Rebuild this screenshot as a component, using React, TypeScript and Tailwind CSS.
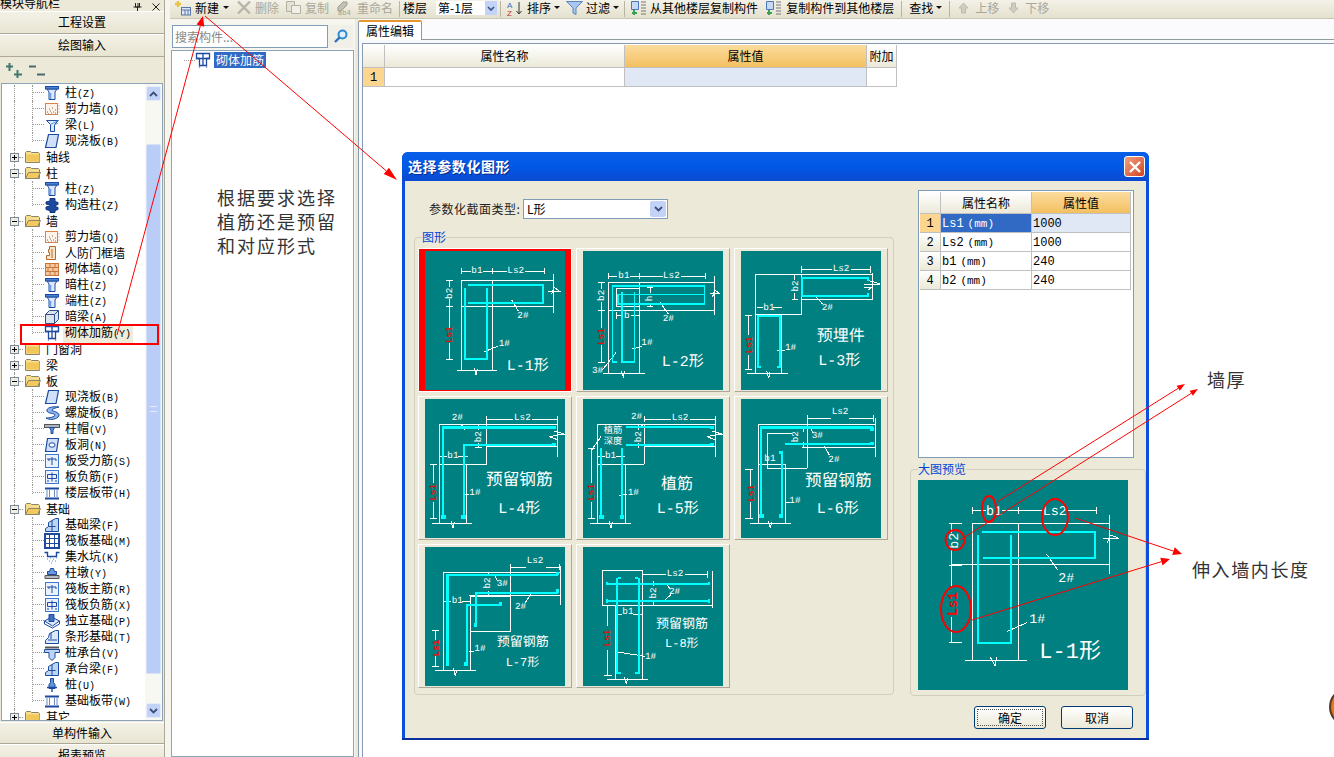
import type { ReactNode } from "react";

const BLUE = "#1b4aa0";

// tree icons, 16x16
const icons: Record<string, ReactNode> = {
  column: (
    <>
      <path d="M3 4h10l-2 3v7.5H5V7z" fill="#dce9fb" stroke={BLUE} />
      <rect x="1.5" y="1.5" width="13" height="2.5" fill="#4a84d8" stroke={BLUE} />
      <path d="M6.5 8v6" stroke="#6fa0e4" strokeWidth="1.5" />
    </>
  ),
  shear: (
    <>
      <rect x="1.5" y="2.5" width="12" height="11" fill="#fdf3e8" stroke="#d9834a" />
      <path d="M3 11h1M6 10h1M9 11h1M5 8h1M8 7h1M11 9h1M11 12h1M7 12h1M4 13h1" stroke="#777" />
      <path d="M14.5 5h1M14.5 8h1M14.5 11h1" stroke="#d9834a" />
    </>
  ),
  beam: (
    <>
      <path d="M2.5 3.5h12l-4 4v7h-4v-7z" fill="#dbe8fa" stroke={BLUE} />
      <path d="M6.5 7.5l8-4M10 8l4-2" stroke="#5a9bd8" />
    </>
  ),
  slab: <path d="M4.5 1.5h10l-2.5 13H1.5z" fill="#cfe0f8" stroke={BLUE} strokeWidth="1.2" />,
  construct: (
    <path d="M6 1.5h5v3l3 1v2l-3 1v1l3 1v2l-3 1v2H6v-2l-4-1V10l4-1V8L2 7V5l4-1z" fill={BLUE} stroke="#10357c" />
  ),
  frame: (
    <path d="M5.5 1.5h6v13H2.5v-4h3v-3h-1v-3h1zM8 4v9" fill="#f7e3c6" stroke="#b06a30" />
  ),
  brick: (
    <>
      <rect x="1.5" y="2.5" width="13" height="12" fill="#f5c79c" stroke="#c9743a" />
      <path d="M1.5 6.5h13M1.5 10.5h13M6 2.5v4M11 2.5v4M4 6.5v4M9 6.5v4M6 10.5v4M11 10.5v4" stroke="#c9743a" />
    </>
  ),
  darkbeam: (
    <>
      <path d="M1.5 5.5l4-4h9v9l-4 4h-9z" fill="#dbe3ee" stroke="#2d4f8a" />
      <path d="M1.5 5.5h9v9M10.5 5.5l4-4" stroke="#2d4f8a" fill="none" />
    </>
  ),
  rebar: (
    <>
      <path d="M1.5 1.5h13v5h-3v7h-7v-7h-3z" fill="#fff" stroke={BLUE} strokeWidth="1.3" />
      <path d="M1 6.5h14M8 1.5v12M4.5 14.5v1M11.5 14.5v1" stroke={BLUE} strokeWidth="1.3" />
    </>
  ),
  spiral: (
    <path
      d="M15 2C8 1 2 3 3 6c1 3 8 2 8 4s-6 3-9 3c3 2 9 2 12-1s-1-5-5-6 2-3 6-4z"
      fill="#8fb6ee"
      stroke={BLUE}
    />
  ),
  cap: (
    <>
      <rect x="0.5" y="3.5" width="15" height="3" fill="#aab4bf" stroke="#555" />
      <path d="M5.5 6.5h5l-1.5 3v3h-2v-3z" fill="#5f93dc" stroke={BLUE} />
    </>
  ),
  hole: (
    <>
      <path d="M3.5 1.5h11l-2 13H1.5z" fill="#cfe0f8" stroke={BLUE} strokeWidth="1.2" />
      <ellipse cx="8" cy="8" rx="3" ry="2.2" fill="#fff" stroke={BLUE} />
    </>
  ),
  slabmain: (
    <>
      <rect x="1.5" y="1.5" width="13" height="13" fill="#eaf1fc" stroke="#3d78d0" />
      <path d="M3 6h9M8 4v8M5 6v2M12 6v2" stroke={BLUE} fill="none" />
    </>
  ),
  slabneg: (
    <>
      <rect x="1.5" y="1.5" width="13" height="13" fill="#eaf1fc" stroke="#3d78d0" />
      <path d="M3.5 5.5h9v4h-9zM8 3.5v9M3 12h2M11 12h2" stroke={BLUE} fill="none" />
    </>
  ),
  band: (
    <>
      <path d="M1 3.5h14M1 13.5h14" stroke={BLUE} strokeWidth="2" />
      <path d="M5.5 5v7M10.5 5v7M3 5v7M13 5v7" stroke="#6d8ec0" />
    </>
  ),
  fbeam: (
    <>
      <path d="M1.5 14.5v-3l3-2v-4l7-4h3v13z" fill="#bcd4f5" stroke={BLUE} />
      <path d="M8 3.5v11M4.5 9.5h7" stroke={BLUE} />
    </>
  ),
  raft: (
    <>
      <rect x="1" y="1" width="14" height="14" fill="#fff" stroke={BLUE} strokeWidth="2" />
      <path d="M5.5 1v14M10.5 1v14M1 5.5h14M1 10.5h14" stroke={BLUE} />
    </>
  ),
  sump: (
    <>
      <path d="M0.5 3.5h3v4h9v-4h3" fill="none" stroke={BLUE} strokeWidth="1.4" />
      <path d="M3 10h1M6 9h1M9 10h1M12 9h1M5 12h1M8 12h1M11 12h1M7 14h1" stroke="#4b8ad8" />
    </>
  ),
  pier: (
    <>
      <path d="M1 10.5h14v3H1z" fill="#b6bcc4" stroke="#555" />
      <path d="M6.5 3.5h3l1 3h2v3h-9v-3h2z" fill="#6d9ade" stroke={BLUE} />
    </>
  ),
  indep: (
    <>
      <path d="M0.5 8l7-4 8 4-7 5z" fill="#dbe8fa" stroke={BLUE} />
      <path d="M0.5 8v3l8 4 7-4V8" fill="none" stroke={BLUE} />
      <path d="M5 1.5h5v7H5z" fill="#3f6fc0" stroke={BLUE} />
    </>
  ),
  strip: (
    <>
      <path d="M1.5 14.5v-3l3-3 1-4 6-3h3v13z" fill="#dbe8fa" stroke={BLUE} />
      <path d="M7 4v6M4 11h9" stroke={BLUE} />
    </>
  ),
  pilecap: (
    <>
      <path d="M0.5 4.5h15v3H11v5l-3 3-3-3v-5H0.5z" fill="#bcd4f5" stroke={BLUE} />
      <path d="M1 2.5h14" stroke="#555" strokeWidth="2" />
    </>
  ),
  pile: (
    <>
      <path d="M6.5 1.5h3v4l1.5 2v4H5v-4l1.5-2z" fill="#5f93dc" stroke={BLUE} />
      <path d="M3 10.5h10M8 11.5v3.5" stroke={BLUE} strokeWidth="1.4" />
    </>
  ),
};

type Row = { folder?: "open" | "closed"; label: string; code?: string; icon?: string; last?: boolean; selected?: boolean };

const rows: Row[] = [
  { label: "柱", code: "(Z)", icon: "column" },
  { label: "剪力墙", code: "(Q)", icon: "shear" },
  { label: "梁", code: "(L)", icon: "beam" },
  { label: "现浇板", code: "(B)", icon: "slab", last: true },
  { folder: "closed", label: "轴线" },
  { folder: "open", label: "柱" },
  { label: "柱", code: "(Z)", icon: "column" },
  { label: "构造柱", code: "(Z)", icon: "construct", last: true },
  { folder: "open", label: "墙" },
  { label: "剪力墙", code: "(Q)", icon: "shear" },
  { label: "人防门框墙", icon: "frame" },
  { label: "砌体墙", code: "(Q)", icon: "brick" },
  { label: "暗柱", code: "(Z)", icon: "column" },
  { label: "端柱", code: "(Z)", icon: "column" },
  { label: "暗梁", code: "(A)", icon: "darkbeam" },
  { label: "砌体加筋", code: "(Y)", icon: "rebar", last: true, selected: true },
  { folder: "closed", label: "门窗洞" },
  { folder: "closed", label: "梁" },
  { folder: "open", label: "板" },
  { label: "现浇板", code: "(B)", icon: "slab" },
  { label: "螺旋板", code: "(B)", icon: "spiral" },
  { label: "柱帽", code: "(V)", icon: "cap" },
  { label: "板洞", code: "(N)", icon: "hole" },
  { label: "板受力筋", code: "(S)", icon: "slabmain" },
  { label: "板负筋", code: "(F)", icon: "slabneg" },
  { label: "楼层板带", code: "(H)", icon: "band", last: true },
  { folder: "open", label: "基础" },
  { label: "基础梁", code: "(F)", icon: "fbeam" },
  { label: "筏板基础", code: "(M)", icon: "raft" },
  { label: "集水坑", code: "(K)", icon: "sump" },
  { label: "柱墩", code: "(Y)", icon: "pier" },
  { label: "筏板主筋", code: "(R)", icon: "slabmain" },
  { label: "筏板负筋", code: "(X)", icon: "slabneg" },
  { label: "独立基础", code: "(P)", icon: "indep" },
  { label: "条形基础", code: "(T)", icon: "strip" },
  { label: "桩承台", code: "(V)", icon: "pilecap" },
  { label: "承台梁", code: "(F)", icon: "fbeam" },
  { label: "桩", code: "(U)", icon: "pile" },
  { label: "基础板带", code: "(W)", icon: "band", last: true },
  { folder: "closed", label: "其它" },
];

const Icon16 = ({ name }: { name: string }) => (
  <svg width="16" height="16" viewBox="0 0 16 16" className="shrink-0">
    {icons[name]}
  </svg>
);

const Folder = ({ open }: { open: boolean }) => (
  <svg width="16" height="14" viewBox="0 0 16 14" className="shrink-0">
    <path d="M0.5 12.5v-10l1-1h4l1 1h7l1 1v9z" fill={open ? "#f7dc8c" : "#f8de90"} stroke="#8a8468" />
    {open && <path d="M0.5 12.5l3-6h12l-3 6z" fill="#f4c95d" stroke="#8a8468" />}
    {!open && <path d="M1.5 4.5h13v7h-13z" fill="#f2c75a" />}
  </svg>
);

const TreeRow = ({ row }: { row: Row }) => {
  if (row.folder) {
    return (
      <div className="flex h-4 items-center">
        <div className="relative h-4 w-[21px] shrink-0">
          <div className="absolute left-[12px] top-0 h-4 border-l border-dotted border-[#999]" />
          <div className="absolute left-[8px] top-[4px] flex h-[9px] w-[9px] items-center justify-center border border-[#7f8a99] bg-[#f0eee2]">
            <div className="relative h-[1px] w-[5px] bg-black">
              {row.folder === "closed" && <div className="absolute left-[2px] top-[-2px] h-[5px] w-[1px] bg-black" />}
            </div>
          </div>
          <div className="absolute left-[17px] top-[8px] w-[4px] border-t border-dotted border-[#999]" />
        </div>
        <div className="ml-[2px]">
          <Folder open={row.folder === "open"} />
        </div>
        <span className="ml-[5px] text-[12px] leading-4 text-black">{row.label}</span>
      </div>
    );
  }
  return (
    <div className="flex h-4 items-center">
      <div className="h-4 w-[13px] shrink-0 border-r border-dotted border-[#999]" />
      <div className="w-[17px] shrink-0" />
      <div className={`w-[12px] shrink-0 self-start border-l border-dotted border-[#999] ${row.last ? "h-[9px]" : "h-4"}`}>
        <div className="h-[8px] border-b border-dotted border-[#999]" />
      </div>
      <Icon16 name={row.icon ?? "column"} />
      <span
        className={`ml-[3px] whitespace-nowrap px-[2px] text-[12px] leading-4 text-black ${row.selected ? "bg-[#efecd9]" : ""}`}
      >
        {row.label}
        {row.code && <span className="font-['Liberation_Mono',monospace] text-[10px]">{row.code}</span>}
      </span>
    </div>
  );
};

const SideButton = ({ children, h }: { children: ReactNode; h: string }) => (
  <div
    className={`flex w-full shrink-0 items-center justify-center border-t border-b border-t-white border-b-[#aca899] bg-gradient-to-b from-[#f3f1e6] to-[#e8e5d2] pb-[1px] text-[12px] text-black ${h}`}
  >
    {children}
  </div>
);

const ScrollArrow = ({ up }: { up?: boolean }) => (
  <div className="flex h-[15px] w-[15px] items-center justify-center rounded-[2px] border border-[#e6edfb] bg-[#c3d3f8]">
    <svg width="9" height="6" viewBox="0 0 9 6">
      <path d={up ? "M1 5l3.5-3.5L8 5" : "M1 1l3.5 3.5L8 1"} fill="none" stroke="#3b4f7c" strokeWidth="1.8" />
    </svg>
  </div>
);

const Sidebar = () => (
  <aside className="flex h-[757px] w-[165px] shrink-0 flex-col overflow-hidden border-r border-[#aca899] bg-[#ece9d8]">
    <div className="flex h-[11px] shrink-0 items-end overflow-hidden">
      <span className="text-[12px] leading-[16px] text-black">模块导航栏</span>
      <svg width="9" height="8" viewBox="0 0 9 8" className="ml-[73px] shrink-0">
        <path d="M2.5 0v4h4V0M0.5 4h8M4.5 4v4M5 0v4" fill="none" stroke="#222" />
      </svg>
      <svg width="8" height="8" viewBox="0 0 8 8" className="ml-[10px] shrink-0">
        <path d="M0.5 0.5l7 7M7.5 0.5l-7 7" stroke="#222" />
      </svg>
    </div>
    <SideButton h="h-[23px]">工程设置</SideButton>
    <SideButton h="h-[23px]">绘图输入</SideButton>
    <div className="flex h-[26px] shrink-0 items-center gap-[7px] pl-[6px]">
      <svg width="16" height="15" viewBox="0 0 16 15">
        <path d="M3.5 0v8M0 3.5h7M11.5 7v8M8 11.5h8" stroke="#41776f" strokeWidth="2" />
      </svg>
      <svg width="16" height="15" viewBox="0 0 16 15">
        <path d="M0 3.5h7M8 11.5h8" stroke="#4a6d6a" strokeWidth="2" />
      </svg>
    </div>
    <div className="mx-[1px] flex h-[638px] shrink-0 overflow-hidden border border-[#8ea4b8] bg-white">
      <div className="min-w-0 flex-1 pt-[1px]">
        {rows.map((row, i) => (
          <TreeRow key={i} row={row} />
        ))}
      </div>
      <div className="flex w-[17px] shrink-0 flex-col bg-[#f8f8f2] pl-[1px] pt-[2px]">
        <ScrollArrow up />
        <div className="h-[43px]" />
        <div className="flex h-[530px] w-[15px] items-center justify-center rounded-[2px] border border-[#d6e0f6] bg-[#bacdf6]">
          <div className="h-[6px] w-[7px] border-y border-[#e6eefc]" />
        </div>
        <div className="h-[29px]" />
        <ScrollArrow />
      </div>
    </div>
    <div className="h-[1px] shrink-0" />
    <SideButton h="h-[22px]">单构件输入</SideButton>
    <SideButton h="h-[22px]">报表预览</SideButton>
  </aside>
);

const Caret = ({ className }: { className: string }) => (
  <svg width="6" height="3" viewBox="0 0 6 3" className={className}>
    <path d="M0 0h6L3 3z" fill="#111" />
  </svg>
);

const Sep = ({ className }: { className: string }) => <div className={`h-[16px] w-[1px] bg-[#b8b5a2] ${className}`} />;

const Toolbar = () => (
  <div className="flex h-[19px] shrink-0 items-start overflow-hidden border-b border-[#c9c6b3] bg-gradient-to-b from-[#f4f2e8] to-[#e4e1ce] pl-[5px] pt-[1px] text-[12px] leading-[13px] text-black">
    <svg width="17" height="15" viewBox="0 0 17 15" className="shrink-0">
      <path d="M3 0v6M0 3h6" stroke="#e8c34a" strokeWidth="2.4" />
      <rect x="6.5" y="6.5" width="9" height="7.5" fill="#dfe8f7" stroke="#5a77a8" />
      <path d="M6.5 9h9M10 9v5M13 9v5" stroke="#5a77a8" />
    </svg>
    <span className="ml-[3px]">新建</span>
    <Caret className="ml-[4px] mt-[5px] shrink-0" />
    <svg width="14" height="13" viewBox="0 0 14 13" className="ml-[8px] shrink-0">
      <path d="M1 0.5l12 12M13 0.5l-12 12" stroke="#b8b6aa" strokeWidth="2.4" />
    </svg>
    <span className="ml-[4px] text-[#a9a79a]">删除</span>
    <svg width="15" height="13" viewBox="0 0 15 13" className="ml-[7px] shrink-0">
      <path d="M0.5 0.5h8v10h-8z" fill="#e4e2d6" stroke="#b3b1a4" />
      <path d="M5.5 4.5h9v8h-9z" fill="#f0efe6" stroke="#b3b1a4" />
    </svg>
    <span className="ml-[4px] text-[#a9a79a]">复制</span>
    <svg width="15" height="14" viewBox="0 0 15 14" className="ml-[8px] shrink-0">
      <path d="M1 6l5-5h4v3L4 10H1z" fill="#c2c0b3" stroke="#a09e90" />
      <text x="1" y="13.5" fontSize="7" fill="#a09e90" fontFamily="Liberation Mono">ab4</text>
    </svg>
    <span className="ml-[5px] text-[#a9a79a]">重命名</span>
    <Sep className="ml-[6px]" />
    <span className="ml-[3px]">楼层</span>
    <div className="ml-[9px] flex h-[14px] w-[61px] shrink-0 justify-between bg-white">
      <span className="pl-[2px]">第-1层</span>
      <div className="flex h-[14px] w-[12px] items-center justify-center bg-[#c3d3f8]">
        <svg width="8" height="5" viewBox="0 0 8 5">
          <path d="M1 1l3 3 3-3" fill="none" stroke="#3b4f7c" strokeWidth="1.6" />
        </svg>
      </div>
    </div>
    <Sep className="ml-[3px]" />
    <svg width="18" height="15" viewBox="0 0 18 15" className="ml-[5px] shrink-0">
      <text x="1" y="7" fontSize="8" fill="#3a6fc4" fontFamily="Liberation Sans">A</text>
      <text x="1" y="15" fontSize="8" fill="#c03030" fontFamily="Liberation Sans">Z</text>
      <path d="M13 1v11M10.5 10l2.5 3 2.5-3" fill="none" stroke="#333" />
    </svg>
    <span className="ml-[3px]">排序</span>
    <Caret className="ml-[3px] mt-[5px] shrink-0" />
    <svg width="17" height="14" viewBox="0 0 17 14" className="ml-[6px] shrink-0">
      <path d="M0.5 0.5h16L10 7v6.5l-3-1.5V7z" fill="#a9c7ee" stroke="#5b86bf" />
    </svg>
    <span className="ml-[3px]">过滤</span>
    <Caret className="ml-[3px] mt-[5px] shrink-0" />
    <Sep className="ml-[5px]" />
    <svg width="16" height="15" viewBox="0 0 16 15" className="ml-[6px] shrink-0">
      <path d="M0.5 0.5h7v8h-7z" fill="#c9d9f4" stroke="#4c77b8" />
      <path d="M10 1h5M10 4h5M10 7h5M10 10h5M10 13h5" stroke="#777" />
      <path d="M3 9v5M1 12h5" stroke="#3aa055" strokeWidth="2" />
    </svg>
    <span className="ml-[3px] whitespace-nowrap">从其他楼层复制构件</span>
    <svg width="16" height="15" viewBox="0 0 16 15" className="ml-[8px] shrink-0">
      <path d="M0.5 0.5h7v8h-7z" fill="#c9d9f4" stroke="#4c77b8" />
      <path d="M10 1h5M10 4h5M10 7h5M10 10h5M10 13h5" stroke="#777" />
      <path d="M3 9v5M1 12h5" stroke="#3aa055" strokeWidth="2" />
    </svg>
    <span className="ml-[4px] whitespace-nowrap">复制构件到其他楼层</span>
    <Sep className="ml-[7px]" />
    <span className="ml-[7px]">查找</span>
    <Caret className="ml-[3px] mt-[5px] shrink-0" />
    <Sep className="ml-[7px]" />
    <svg width="11" height="12" viewBox="0 0 11 12" className="ml-[8px] mt-[1px] shrink-0">
      <path d="M5.5 1L10 6H7.5v5h-4V6H1z" fill="#cfcdc0" stroke="#bdbbad" />
    </svg>
    <span className="ml-[6px] text-[#a9a79a]">上移</span>
    <svg width="11" height="12" viewBox="0 0 11 12" className="ml-[9px] mt-[1px] shrink-0">
      <path d="M5.5 11L10 6H7.5V1h-4v5H1z" fill="#cfcdc0" stroke="#bdbbad" />
    </svg>
    <span className="ml-[6px] text-[#a9a79a]">下移</span>
  </div>
);

const ComponentPanel = () => (
  <div className="flex w-[185px] shrink-0 flex-col bg-[#f6f5ee] pl-[1px] pr-[1px]">
    <div className="flex h-[31px] shrink-0 pl-[1px] pt-[6px]">
      <div className="flex h-[23px] w-[156px] items-center border border-[#7f9db9] bg-white pl-[2px] text-[12px] text-[#888]">
        搜索构件...
      </div>
      <div className="flex h-[23px] w-[25px] items-center justify-center bg-[#f1f0e8]">
        <svg width="15" height="15" viewBox="0 0 15 15">
          <circle cx="9.5" cy="5.5" r="4" fill="#dff0fb" stroke="#2d8ad0" strokeWidth="2" />
          <path d="M6.5 8.5L2 13" stroke="#2d6fb8" strokeWidth="2.4" />
        </svg>
      </div>
    </div>
    <div className="flex-1 border border-[#8ea4b8] bg-white pt-[1px]">
      <div className="flex h-4 items-center pl-[12px]">
        <div className="w-[11px] border-t border-dotted border-[#999]" />
        <Icon16 name="rebar" />
        <span className="ml-[3px] bg-[#316ac5] px-[2px] text-[12px] leading-4 text-white">砌体加筋</span>
      </div>
    </div>
  </div>
);

const headCell = "flex items-center justify-center border-r border-b border-[#c0c0c0] bg-gradient-to-b from-white to-[#ece9d8] text-[12px] text-black";
const hotHead = "flex items-center justify-center border-r border-b border-[#c0c0c0] bg-gradient-to-b from-[#fbdc9d] to-[#f3c060] text-[12px] text-black";

const MainPane = () => (
  <div className="flex min-w-0 flex-1 flex-col">
    <div className="flex h-[21px] shrink-0 items-end bg-[#fbfbfe]">
      <div className="flex h-[20px] w-[64px] items-center justify-center rounded-t-[2px] border-x border-t-2 border-x-[#8a9ab0] border-t-[#e8962e] bg-white text-[12px] text-black">
        属性编辑
      </div>
      <div className="flex-1 border-b border-[#919b9c]" />
    </div>
    <div className="flex flex-1 border-l border-[#8a9ab0] bg-[#f8f9fc] pl-[3px] pt-[3px]">
      <div className="flex-1 border-l border-t border-[#8a9ab0] bg-white">
        <div className="grid w-[534px] grid-cols-[22px_240px_242px_30px] grid-rows-[23px_19px] pt-[1px]">
          <div className={headCell} />
          <div className={headCell}>属性名称</div>
          <div className={hotHead}>属性值</div>
          <div className={headCell}>附加</div>
          <div className="flex items-center justify-center border-r border-b border-[#c0c0c0] bg-[#fcd58f] pt-[1px] font-['Liberation_Mono',monospace] text-[12px]">1</div>
          <div className="border-r border-b border-[#c0c0c0]" />
          <div className="border-r border-b border-[#c0c0c0] bg-[#e0e8f5]" />
          <div className="border-r border-b border-[#c0c0c0]" />
        </div>
      </div>
    </div>
  </div>
);

const Wire = ({ d }: { d: string }) => <path d={d} fill="none" stroke="#fff" strokeWidth="3" />;
const Bar = ({ d, w = 7 }: { d: string; w?: number }) => <path d={d} fill="none" stroke="#00ffff" strokeWidth={w} />;
const Lab = ({ x, y, s = 28, children }: { x: number; y: number; s?: number; children: ReactNode }) => (
  <text x={x} y={y} fontSize={s} fill="#fff" dominantBaseline="central" textRendering="geometricPrecision" className="font-['Liberation_Mono','Noto_Sans_CJK_SC',monospace]">
    {children}
  </text>
);
const Rot = ({ x, y, s = 28, red, children }: { x: number; y: number; s?: number; red?: boolean; children: ReactNode }) => (
  <text
    x={x}
    y={y}
    fontSize={s}
    fontWeight={red ? 700 : 400}
    fill={red ? "#ff0000" : "#fff"}
    textAnchor="middle"
    dominantBaseline="central"
    transform={`rotate(-90 ${x} ${y})`}
    className="font-['Liberation_Mono',monospace]"
  >
    {children}
  </text>
);

const tiles: { box: string; selected?: boolean; art: ReactNode }[] = [
  {
    box: "75 305 420 417",
    selected: true,
    art: (
      <>
        <Wire d="M184 355V375M184 365H212M248 365H320M376 365H434M434 355V375M278 355V375M184 392V663M278 392V663M184 392H460M184 472H460M460 375V492M170 663H292M222 655L228 676L232 658M445 425H478L462 414L455 434M137 392H160M137 472H160M137 630H160M147 392V412M147 450V535M147 580V630M335 452L355 485M253 607L295 590" />
        <Bar d="M203 408H430V460H205" w={6} />
        <Bar d="M194 415V630H262V415" w={6} />
        <Lab x={214} y={365}>b1</Lab>
        <Lab x={322} y={365}>Ls2</Lab>
        <Rot x={148} y={432}>b2</Rot>
        <Rot x={148} y={556} red>Ls1</Rot>
        <Lab x={352} y={498}>2#</Lab>
        <Lab x={296} y={582}>1#</Lab>
        <Lab x={320} y={650} s={45}>L-1形</Lab>
      </>
    ),
  },
  {
    box: "549 303 420 417",
    art: (
      <>
        <Wire d="M625 368V388M625 378H652M690 378H788M842 378H917M917 368V388M718 368V388M625 395V670M718 395V670M625 397H943M625 480H943M943 378V495M610 670H735M664 662L670 680L674 664M930 430H958L944 420L938 440M650 415H718M650 415V470H718M750 412V430M750 458V470M740 412H760M740 470H760M650 497H668M692 497H718M650 487V507M595 397H615M595 480H615M595 637H615M605 397V418M605 455V535M605 585V637M780 457L805 492M695 597L725 590M607 660L648 608" />
        <Bar d="M650 635H637V408H913V433H653V462H913V433" w={5} />
        <Bar d="M665 425V635H703V425" w={5} />
        <Lab x={655} y={376}>b1</Lab>
        <Lab x={789} y={376}>Ls2</Lab>
        <Lab x={672} y={497}>b</Lab>
        <Rot x={750} y={445}>h</Rot>
        <Rot x={605} y={436}>b2</Rot>
        <Rot x={605} y={560} red>Ls1</Rot>
        <Lab x={788} y={507}>2#</Lab>
        <Lab x={724} y={578}>1#</Lab>
        <Lab x={576} y={663}>3#</Lab>
        <Lab x={785} y={635} s={45}>L-2形</Lab>
      </>
    ),
  },
  {
    box: "33 33 420 417",
    art: (
      <>
        <Wire d="M215 78V98M215 88H306M364 88H422M422 78V98M77 102H428M77 102V400M215 102V222M77 222H215M215 178H428M427 100V180M155 222V400M50 400H175M45 225H65M45 388H65M55 225V285M55 345V388M192 102V120M192 160V178M185 178H205M80 203H100M130 203H155M255 168L278 192M140 330H165M110 392L116 415L120 396M402 132H450L418 122M402 142H425L415 150" />
        <Bar d="M415 122V115H215V168H415V160" w={6} />
        <Bar d="M92 382H83V227H150V382H140" w={6} />
        <Lab x={100} y={202}>b1</Lab>
        <Lab x={308} y={85}>Ls2</Lab>
        <Rot x={195} y={138}>b2</Rot>
        <Rot x={57} y={315} red>Ls1</Rot>
        <Lab x={275} y={203}>2#</Lab>
        <Lab x={165} y={323}>1#</Lab>
        <Lab x={260} y={292} s={48}>预埋件</Lab>
        <Lab x={265} y={362} s={45}>L-3形</Lab>
      </>
    ),
  },
  {
    box: "30 12 420 417",
    art: (
      <>
        <Wire d="M215 62V82M215 72H295M352 72H427M427 62V82M73 88H430M73 88V385M215 70V208M73 208H215M215 155H430M427 70V185M155 208V385M50 385H172M45 208H65M45 370H65M55 208V265M55 320V370M190 88V105M190 145V160M180 158H200M73 183H95M130 183H158M147 298H163M140 90L150 104M108 378L114 400L118 382M402 125L440 118H450L418 108M402 125L430 135" />
        <Bar d="M83 368V97H420" w={7} />
        <Bar d="M147 368V150H420" w={7} />
        <Bar d="M78 366H92M138 366H152M411 97H424M411 148H424" w={11} />
        <Lab x={110} y={68}>2#</Lab>
        <Lab x={297} y={68}>Ls2</Lab>
        <Lab x={97} y={183}>b1</Lab>
        <Rot x={192} y={125}>b2</Rot>
        <Rot x={55} y={292} red>Ls1</Rot>
        <Lab x={163} y={293}>1#</Lab>
        <Lab x={213} y={258} s={50}>预留钢筋</Lab>
        <Lab x={250} y={343} s={45}>L-4形</Lab>
      </>
    ),
  },
  {
    box: "504 12 420 417",
    art: (
      <>
        <Wire d="M688 62V82M688 72H768M825 72H900M900 62V82M547 88H900M547 88V385M688 88V208M547 208H688M688 155H900M900 70V185M630 208V385M525 385H647M520 160H540M520 370H540M530 160V265M530 320V370M670 88V105M670 145V160M547 183H570M602 183H630M620 298H636M612 302L622 298M680 90L685 98M582 378L588 400L592 382M875 125L915 118H923L891 108M875 125L903 135M530 165L558 125" />
        <Bar d="M633 97H893M633 150H893" w={6} />
        <Bar d="M557 160V368M620 160V368" w={7} />
        <Bar d="M885 97H897M885 148H897M552 366H566M615 366H628" w={11} />
        <Lab x={648} y={65}>2#</Lab>
        <Lab x={770} y={68}>Ls2</Lab>
        <Lab x={570} y={183}>b1</Lab>
        <Lab x={638} y={293}>1#</Lab>
        <Rot x={670} y={125}>b2</Rot>
        <Rot x={530} y={292} red>Ls1</Rot>
        <Lab x={566} y={108} s={28}>植筋</Lab>
        <Lab x={566} y={140} s={28}>深度</Lab>
        <Lab x={738} y={270} s={48}>植筋</Lab>
        <Lab x={725} y={343} s={45}>L-5形</Lab>
      </>
    ),
  },
  {
    box: "33 477 420 417",
    art: (
      <>
        <Wire d="M232 525V545M232 535H303M357 535H430M430 525V545M85 553H437M85 553V850M437 535V650M215 622H437M232 535V685M112 685H232M112 685V580H185M167 672V850M85 672H167M60 850H183M45 687H70M45 835H70M60 687V738M60 785V835M220 562V575M220 605V622M240 562L248 578M283 618L298 645M167 788H180M115 842L121 864L125 846" />
        <Bar d="M93 830V562H430" w={7} />
        <Bar d="M165 612H430" w={7} />
        <Bar d="M148 637H155V830" w={7} />
        <Bar d="M88 828H102M148 828H160M150 637H158M420 566H432M420 610H432" w={11} />
        <Lab x={305} y={516}>Ls2</Lab>
        <Lab x={103} y={655}>b1</Lab>
        <Rot x={197} y={590}>b2</Rot>
        <Rot x={65} y={760} red>Ls1</Rot>
        <Lab x={245} y={588}>3#</Lab>
        <Lab x={295} y={660}>2#</Lab>
        <Lab x={178} y={783}>1#</Lab>
        <Lab x={225} y={725} s={50}>预留钢筋</Lab>
        <Lab x={260} y={808} s={45}>L-6形</Lab>
      </>
    ),
  },
  {
    box: "30 457 420 417",
    art: (
      <>
        <Wire d="M287 507V527M287 517H333M392 517H432M432 507V527M85 532H437M85 532V828M437 515V630M167 605H287M287 515V710M167 710H287M167 605V828M60 828H183M50 708H72M50 815H72M62 708V735M62 785V815M220 532V545M220 590V605M85 620H108M142 620H167M240 545L248 560M330 625L350 595M162 770H178M115 820L121 845L125 826M163 603H437" />
        <Bar d="M97 810V540H430" w={7} />
        <Bar d="M182 692V595H430" w={7} />
        <Bar d="M155 810V630H262" w={7} />
        <Bar d="M92 808H103M148 808H160M176 690H187M256 622V632M423 536H432M423 588H432" w={11} />
        <Lab x={335} y={497}>Ls2</Lab>
        <Lab x={110} y={617}>b1</Lab>
        <Rot x={218} y={565}>b2</Rot>
        <Rot x={65} y={760} red>Ls1</Rot>
        <Lab x={245} y={567}>3#</Lab>
        <Lab x={300} y={637}>2#</Lab>
        <Lab x={178} y={762}>1#</Lab>
        <Lab x={245} y={745} s={39}>预留钢筋</Lab>
        <Lab x={272} y={803} s={36}>L-7形</Lab>
      </>
    ),
  },
  {
    box: "504 457 420 417",
    art: (
      <>
        <Wire d="M683 530V550M683 540H752M810 540H878M878 530V550M562 527H683V632H562zM683 632H893M893 530V640M600 632V855M683 632V855M575 855H698M568 632H590M568 842H590M578 632V695M578 765V842M715 560V575M715 615V632M600 660H620M655 660H683M607 772L690 785M755 570L765 582M745 620L768 600M628 847L634 868L638 850" />
        <Bar d="M575 567H882M575 620H882" w={6} />
        <Bar d="M605 550V838M672 550V838" w={7} />
        <Bar d="M575 561V571M882 561V571M575 614V624M882 614V624M608 550H618M660 550H670M608 834H618M660 834H670" w={6} />
        <Lab x={755} y={538}>Ls2</Lab>
        <Lab x={622} y={652}>b1</Lab>
        <Rot x={715} y={595}>b2</Rot>
        <Rot x={578} y={730} red>Ls1</Rot>
        <Lab x={762} y={590}>2#</Lab>
        <Lab x={690} y={785}>1#</Lab>
        <Lab x={723} y={690} s={39}>预留钢筋</Lab>
        <Lab x={750} y={747} s={36}>L-8形</Lab>
      </>
    ),
  },
];

const Tile = ({ box, selected, art }: { box: string; selected?: boolean; art: ReactNode }) => (
  <div
    className={`flex h-[144px] w-[154px] pl-[6px] pt-[2px] border ${
      selected ? "border-white bg-[#ff0000]" : "border-t-white border-l-white border-b-[#aca899] border-r-[#aca899] bg-[#ece9d8]"
    }`}
  >
    <svg width="140" height="139" viewBox={box} shapeRendering="crispEdges" className="shrink-0 bg-[#008080]">
      {art}
    </svg>
  </div>
);

const tableRows = [
  ["1", "Ls1", "1000"],
  ["2", "Ls2", "1000"],
  ["3", "b1", "240"],
  ["4", "b2", "240"],
];

const mono = "font-['Liberation_Mono','Noto_Sans_CJK_SC',monospace] text-[12px]";

const Dialog = () => (
  <div className="absolute left-[402px] top-[152px] flex h-[588px] w-[747px] flex-col rounded-t-[6px] bg-[#0a50dc]">
    <div className="flex h-[29px] shrink-0 items-center justify-between rounded-t-[6px] bg-gradient-to-b from-[#0a5fe8] via-[#0058e6] to-[#0a4ad0] pl-[6px] pr-[4px]">
      <span className="text-[14px] font-bold tracking-[0.6px] text-white [text-shadow:1px_1px_0_#0a2a8c]">选择参数化图形</span>
      <div className="flex h-[21px] w-[21px] items-center justify-center rounded-[3px] border border-white bg-gradient-to-br from-[#f0a080] to-[#d0401c]">
        <svg width="12" height="12" viewBox="0 0 12 12">
          <path d="M1 1l10 10M11 1L1 11" stroke="#fff" strokeWidth="2.4" />
        </svg>
      </div>
    </div>
    <div className="mx-[3px] flex min-h-0 flex-1 flex-col bg-[#ece9d8] pb-0">
      <div className="flex pl-[9px]">
        <div className="flex w-[480px] shrink-0 flex-col pt-[18px]">
          <div className="flex h-[20px] items-center pl-[15px]">
            <span className="w-[94px] text-[12px] tracking-[0.5px] text-[#222]">参数化截面类型:</span>
            <div className="flex h-[20px] w-[145px] items-center justify-between border border-[#7f9db9] bg-white pl-[3px] pr-[1px] text-[12px] text-black">
              L形
              <div className="flex h-[16px] w-[16px] items-center justify-center rounded-[2px] bg-[#c3d3f8]">
                <svg width="9" height="6" viewBox="0 0 9 6">
                  <path d="M1 1l3.5 3.5L8 1" fill="none" stroke="#3b4f7c" strokeWidth="1.8" />
                </svg>
              </div>
            </div>
          </div>
          <fieldset className="mt-[12px] h-[464px] rounded-[4px] border border-[#d0cebc]">
            <legend className="ml-[7px] text-[12px] leading-3 text-[#0046d5]">图形</legend>
            <div className="grid grid-cols-[154px_154px_154px] grid-rows-[144px_144px_144px] gap-[4px] pl-[3px] pt-[5px]">
              {tiles.map((t) => (
                <Tile key={t.box} box={t.box} selected={t.selected} art={t.art} />
              ))}
            </div>
          </fieldset>
        </div>
        <div className="ml-[16px] flex w-[236px] shrink-0 flex-col pt-[9px]">
          <div className="ml-[8px] h-[268px] w-[216px] border border-[#7f9db9] bg-white pl-[1px] pt-[1px]">
            <div className="grid w-[211px] grid-cols-[21px_91px_99px] grid-rows-[22px_19px_19px_19px_19px]">
              <div className={headCell} />
              <div className={headCell}>属性名称</div>
              <div className={hotHead}>属性值</div>
              {tableRows.map(([n, name, val], i) => (
                <div key={n} className="contents">
                  <div
                    className={`flex items-center justify-center border-r border-b border-[#c0c0c0] pt-[2px] font-['Liberation_Mono',monospace] text-[12px] ${
                      i === 0 ? "bg-[#fcd58f]" : "bg-gradient-to-b from-white to-[#ece9d8]"
                    }`}
                  >
                    {n}
                  </div>
                  <div className={`flex items-center border-r border-b border-[#c0c0c0] pl-[1px] pt-[2px] ${mono} ${i === 0 ? "bg-[#316ac5] text-white" : "text-black"}`}>
                    {name}
                    <span className="ml-[4px] text-[11px]">(mm)</span>
                  </div>
                  <div className={`flex items-center border-r border-b border-[#c0c0c0] pl-[1px] pt-[2px] ${mono} text-black ${i === 0 ? "bg-[#e0e8f5]" : ""}`}>
                    {val}
                  </div>
                </div>
              ))}
            </div>
          </div>
          <fieldset className="mt-[5px] h-[233px] rounded-[4px] border border-[#d0cebc] pl-[7px]">
            <legend className="ml-[0px] text-[12px] leading-3 text-[#0046d5]">大图预览</legend>
            <div className="pt-[5px]">
              <svg width="210" height="210" viewBox="54 90 630 630" shapeRendering="crispEdges" className="block bg-[#008080]">
                <Wire d="M218 172V192M218 182H258M305 182H430M498 182H590M590 172V192M355 172V192M218 220V632M355 220V632M218 220H628M155 343H628M628 195V372M195 632H380M148 220H185M148 345H185M148 578H185M155 220V250M155 300V410M155 500V578M440 313L473 360M320 545L380 518M270 620L285 648L290 622M608 265H658L630 255L622 280" />
                <Bar d="M245 245H585V323H248" w={6} />
                <Bar d="M235 255V578H333V255" w={6} />
                <Lab x={258} y={185} s={40}>b1</Lab>
                <Lab x={428} y={185} s={40}>Ls2</Lab>
                <Rot x={165} y={272} s={40}>b2</Rot>
                <Rot x={160} y={462} s={40} red>Ls1</Rot>
                <Lab x={475} y={385} s={40}>2#</Lab>
                <Lab x={388} y={510} s={40}>1#</Lab>
                <Lab x={418} y={605} s={66}>L-1形</Lab>
              </svg>
            </div>
          </fieldset>
        </div>
      </div>
      <div className="mt-[10px] flex justify-end gap-[15px] pr-[13px]">
        <button className="h-[23px] w-[72px] rounded-[3px] border border-[#003c74] bg-gradient-to-b from-white to-[#ece9d8] p-[2px] text-[12px] text-black">
          <div className="flex h-full w-full items-center justify-center border border-dotted border-[#555]">确定</div>
        </button>
        <button className="h-[23px] w-[72px] rounded-[3px] border border-[#003c74] bg-gradient-to-b from-white to-[#ece9d8] text-[12px] text-black">
          取消
        </button>
      </div>
    </div>
    <div className="h-[2px] shrink-0 bg-[#0a2f9e]" />
  </div>
);

const Arrow = ({ x1, y1, x2, y2, len = 12, half = 4 }: { x1: number; y1: number; x2: number; y2: number; len?: number; half?: number }) => {
  const d = Math.hypot(x2 - x1, y2 - y1);
  const ux = (x2 - x1) / d;
  const uy = (y2 - y1) / d;
  const bx = x2 - ux * len;
  const by = y2 - uy * len;
  const pts = `${x2},${y2} ${bx - uy * half},${by + ux * half} ${bx + uy * half},${by - ux * half}`;
  return (
    <>
      <line x1={x1} y1={y1} x2={bx} y2={by} stroke="#ff0000" strokeWidth="1" />
      <polygon points={pts} fill="#ff0000" />
    </>
  );
};

const Annotations = () => (
  <svg width="1334" height="757" viewBox="0 0 1334 757" className="pointer-events-none absolute left-0 top-0">
    <rect x="21" y="325" width="137" height="19" fill="none" stroke="#ff0000" strokeWidth="2" />
    <Arrow x1={117} y1={335} x2={203} y2={16} len={10} half={4} />
    <Arrow x1={205} y1={16} x2={397} y2={180} len={14} half={4} />
    <Arrow x1={997} y1={502} x2={1185} y2={384} len={8} half={3} />
    <Arrow x1={960} y1={540} x2={1198} y2={389} len={8} half={3} />
    <Arrow x1={1075} y1={518} x2={1182} y2={554} len={9} half={4} />
    <Arrow x1={972} y1={620} x2={1170} y2={559} len={9} half={4} />
    <ellipse cx="989" cy="509" rx="7" ry="13" fill="none" stroke="#ff0000" strokeWidth="2" />
    <ellipse cx="1055" cy="517" rx="13" ry="18" fill="none" stroke="#ff0000" strokeWidth="2" />
    <ellipse cx="955" cy="540" rx="9.5" ry="10" fill="none" stroke="#ff0000" strokeWidth="2" />
    <ellipse cx="956" cy="609" rx="15" ry="23" fill="none" stroke="#ff0000" strokeWidth="2" />
  </svg>
);

export default function App() {
  return (
    <div className="relative flex h-[757px] w-[1334px] overflow-hidden bg-white font-['Noto_Sans_CJK_SC','Liberation_Sans',sans-serif]">
      <Sidebar />
      <div className="h-[757px] w-[5px] shrink-0 bg-[#f6f5ee]" />
      <div className="flex min-w-0 flex-1 flex-col">
        <Toolbar />
        <div className="flex min-h-0 flex-1">
          <ComponentPanel />
          <div className="w-[3px] shrink-0 bg-[#ece9d8]" />
          <MainPane />
        </div>
      </div>

      <div className="absolute left-[217px] top-[185px] whitespace-pre text-[18px] leading-[24px] tracking-[2px] text-[#333]">
        {"根据要求选择\n植筋还是预留\n和对应形式"}
      </div>
      <div className="absolute left-[1207px] top-[367px] text-[18px] leading-[24px] tracking-[1.6px] text-[#333]">墙厚</div>
      <div className="absolute left-[1192px] top-[557px] text-[18px] leading-[24px] tracking-[1.6px] text-[#333]">伸入墙内长度</div>
      <div className="absolute left-[1329px] top-[687px] h-[40px] w-[40px] rounded-full border-2 border-[#5a3a20] bg-[#e8761e]" />

      <Dialog />
      <Annotations />
    </div>
  );
}
